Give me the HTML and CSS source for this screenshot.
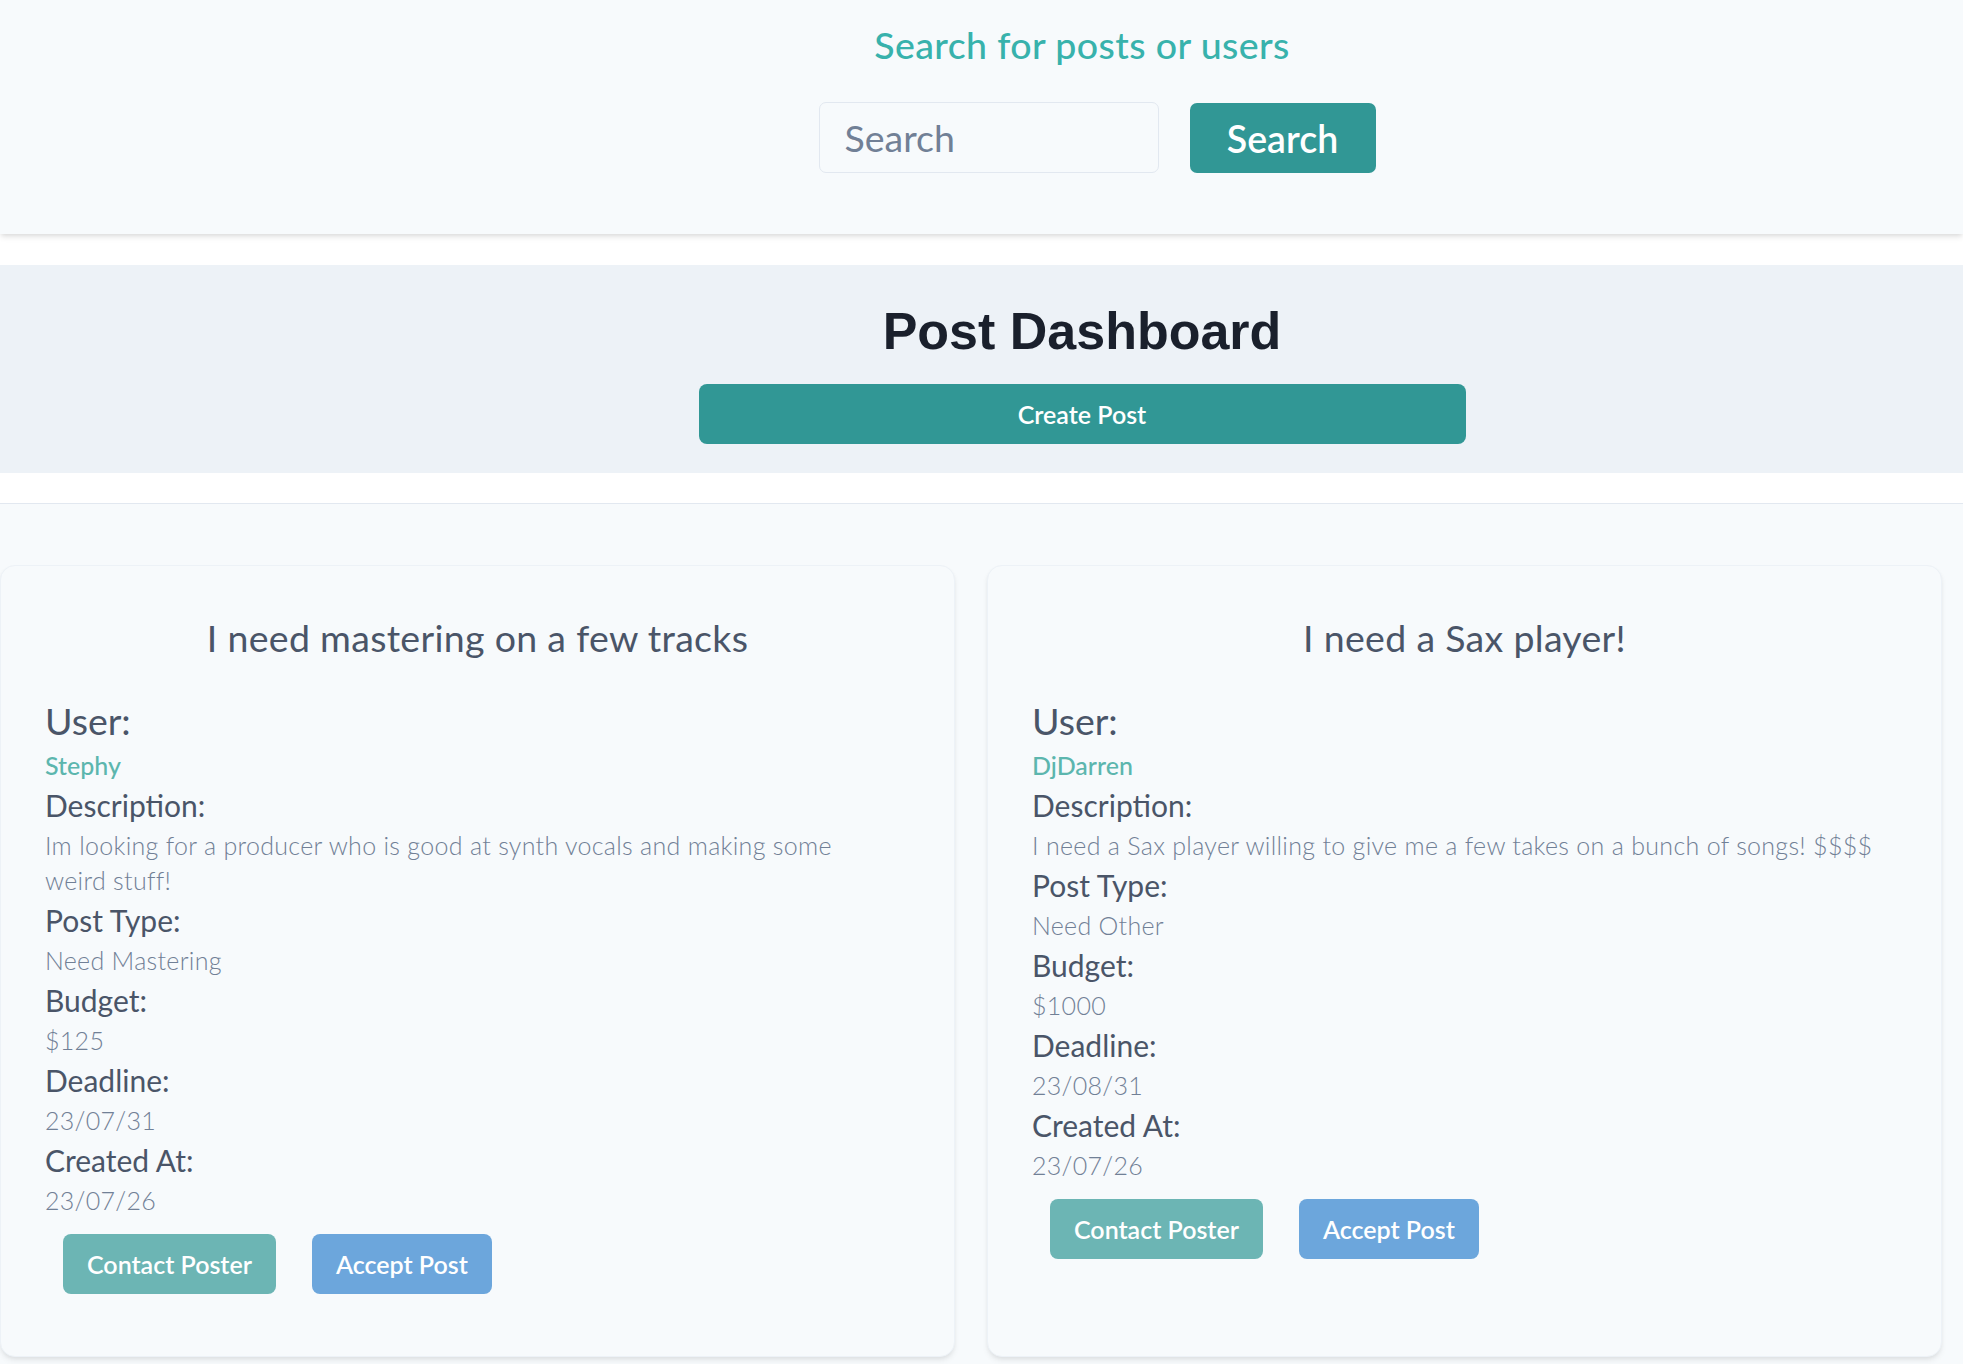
FILE: index.html
```html
<!DOCTYPE html>
<html lang="en">
<head>
<meta charset="utf-8">
<title>Post Dashboard</title>
<link rel="stylesheet" href="styles.css">
</head>
<body>
<header class="search-bar">
  <div class="search-inner">
    <h2 class="search-title">Search for posts or users</h2>
    <form class="search-form">
      <input class="search-input" type="text" placeholder="Search">
      <button class="search-btn" type="button">Search</button>
    </form>
  </div>
</header>

<section class="dash-head">
  <h1 class="dash-title">Post Dashboard</h1>
  <button class="create-btn" type="button">Create Post</button>
</section>

<main class="posts">
  <div class="post-grid">
    <article class="card">
      <h3 class="card-title">I need mastering on a few tracks</h3>
      <div class="user-label">User:</div>
      <a class="user-link" href="#">Stephy</a>
      <div class="label">Description:</div>
      <p class="value">Im looking for a producer who is good at synth vocals and making some weird stuff!</p>
      <div class="label">Post Type:</div>
      <p class="value">Need Mastering</p>
      <div class="label">Budget:</div>
      <p class="value">$125</p>
      <div class="label">Deadline:</div>
      <p class="value">23/07/31</p>
      <div class="label">Created At:</div>
      <p class="value">23/07/26</p>
      <div class="actions">
        <button class="btn btn-contact" type="button">Contact Poster</button>
        <button class="btn btn-accept" type="button">Accept Post</button>
      </div>
    </article>

    <article class="card">
      <h3 class="card-title">I need a Sax player!</h3>
      <div class="user-label">User:</div>
      <a class="user-link" href="#">DjDarren</a>
      <div class="label">Description:</div>
      <p class="value">I need a Sax player willing to give me a few takes on a bunch of songs! $$$$</p>
      <div class="label">Post Type:</div>
      <p class="value">Need Other</p>
      <div class="label">Budget:</div>
      <p class="value">$1000</p>
      <div class="label">Deadline:</div>
      <p class="value">23/08/31</p>
      <div class="label">Created At:</div>
      <p class="value">23/07/26</p>
      <div class="actions">
        <button class="btn btn-contact" type="button">Contact Poster</button>
        <button class="btn btn-accept" type="button">Accept Post</button>
      </div>
    </article>
  </div>
</main>
</body>
</html>
```

FILE: styles.css
```css
* { box-sizing: border-box; }

html, body {
  margin: 0;
  padding: 0;
  background: #ffffff;
  font-family: "Lato", "Open Sans", sans-serif;
}

/* ---------- search header ---------- */
.search-bar {
  position: relative;
  z-index: 2;
  background: #f7fafc;
  box-shadow: 0 4px 6px -1px rgba(0, 0, 0, 0.10), 0 2px 4px -1px rgba(0, 0, 0, 0.06);
  padding: 22px 0 61px 201px;
}

.search-inner {
  display: flex;
  flex-direction: column;
  align-items: center;
}

.search-title {
  margin: 0;
  font-size: 37.5px;
  line-height: 45px;
  font-weight: 500;
  letter-spacing: 0.4px;
  color: #38b2ac;
}

.search-form {
  margin: 35px 0 0 30px;
  display: flex;
  align-items: flex-start;
  gap: 31px;
}

.search-input {
  width: 340px;
  height: 71px;
  padding: 0 25px;
  border: 1px solid #e2e8f0;
  border-radius: 7px;
  background: #f7fafc;
  font-family: inherit;
  font-size: 37.5px;
  font-weight: 400;
  color: #4a5568;
  outline: none;
}

.search-input::placeholder {
  color: #718096;
}

.search-btn {
  margin-top: 1px;
  width: 186px;
  height: 70px;
  border: 0;
  border-radius: 7px;
  background: #319795;
  color: #ffffff;
  font-family: inherit;
  font-size: 37.5px;
  font-weight: 600;
  padding: 0;
}

/* ---------- dashboard heading ---------- */
.dash-head {
  margin-top: 31px;
  background: #edf2f7;
  padding: 35px 0 29px 201px;
  display: flex;
  flex-direction: column;
  align-items: center;
}

.dash-title {
  margin: 0;
  font-family: "Liberation Sans", Arial, sans-serif;
  font-size: 52px;
  line-height: 62px;
  font-weight: 700;
  color: #1a202c;
}

.create-btn {
  margin-top: 22px;
  width: 767px;
  height: 60px;
  border: 0;
  border-radius: 8px;
  background: #319795;
  color: #ffffff;
  font-family: inherit;
  font-size: 25px;
  font-weight: 600;
}

/* ---------- posts ---------- */
.posts {
  margin-top: 30px;
  border-top: 1px solid #e2e8f0;
  background: #f7fafc;
  padding: 61px 21px 7px 0;
}

.post-grid {
  display: grid;
  grid-template-columns: 1fr 1fr;
  gap: 32px;
}

.card {
  background: #f7fafc;
  border: 1px solid #edf2f7;
  border-radius: 15px;
  box-shadow: 0 4px 6px -1px rgba(0, 0, 0, 0.08), 0 2px 4px -1px rgba(0, 0, 0, 0.05);
  padding: 49px 44px 62px;
  display: flex;
  flex-direction: column;
  align-items: flex-start;
}

.card-title {
  align-self: stretch;
  margin: 0 0 38px;
  text-align: center;
  font-size: 37.5px;
  line-height: 45px;
  font-weight: 400;
  letter-spacing: 0.3px;
  color: #4a5568;
}

.user-label {
  font-size: 37.5px;
  line-height: 45px;
  font-weight: 400;
  color: #4a5568;
}

.user-link {
  margin-top: 5px;
  font-size: 25px;
  line-height: 35px;
  font-weight: 500;
  color: #5cb6ae;
  text-decoration: none;
}

.label {
  margin-top: 2px;
  font-size: 30px;
  line-height: 40px;
  font-weight: 400;
  color: #4a5568;
}

.value {
  max-width: 850px;
  margin: 3px 0 0;
  font-size: 25px;
  line-height: 35px;
  font-weight: 300;
  letter-spacing: 0.3px;
  color: #718096;
}

.actions {
  margin: 16px 0 0 18px;
  display: flex;
  gap: 36px;
}

.btn {
  height: 60px;
  padding: 0 24px;
  border: 0;
  border-radius: 8px;
  color: #ffffff;
  font-family: inherit;
  font-size: 25px;
  font-weight: 600;
}

.btn-contact {
  background: #6cb5b4;
}

.btn-accept {
  background: #6ca6dc;
}
```
